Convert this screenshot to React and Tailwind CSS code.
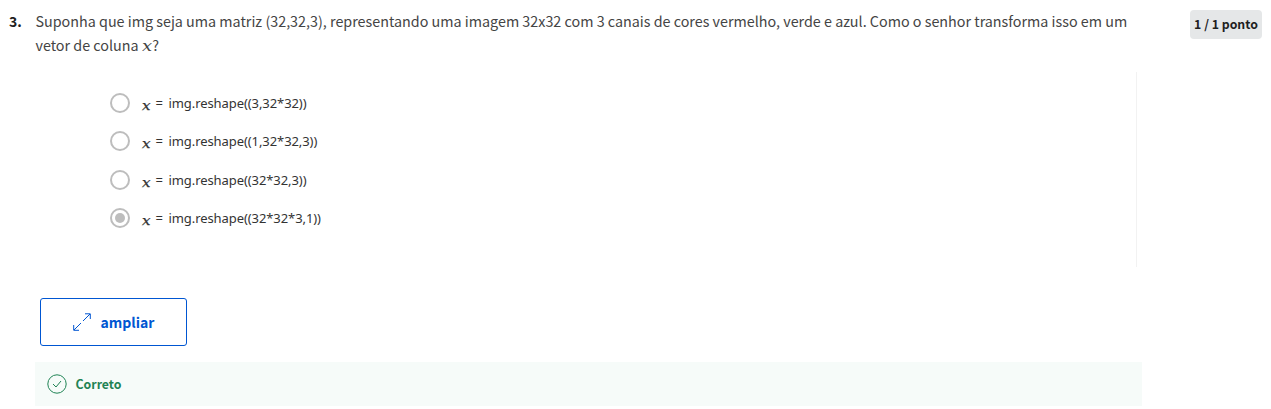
const options = [
  { text: 'img.reshape((3,32*32))', height: 'h-[38px]' },
  { text: 'img.reshape((1,32*32,3))', height: 'h-[39px]' },
  { text: 'img.reshape((32*32,3))', height: 'h-[38px]' },
  { text: 'img.reshape((32*32*3,1))', height: 'h-[38px]', checked: true },
];

function Radio({ checked }) {
  return (
    <span className="flex h-5 w-5 shrink-0 items-center justify-center rounded-full border-2 border-[#bdbdbd]">
      {checked && <span className="h-2.5 w-2.5 rounded-full bg-[#bdbdbd]" />}
    </span>
  );
}

export default function App() {
  return (
    <main className="flex h-[409px] w-[1271px] flex-col overflow-hidden bg-white font-['Noto_Sans_CJK_SC',sans-serif] text-[#1f1f1f]">
      <div className="flex h-[72px] items-start pl-[9px] pt-[9px]">
        <span className="w-[26.5px] text-[14px] leading-6 font-bold">3.</span>
        <p className="w-[1154.5px] text-[14.33px] leading-6 whitespace-nowrap text-[#444]">
          Suponha que img seja uma matriz (32,32,3), representando uma imagem 32x32 com 3 canais de cores vermelho, verde e azul. Como o senhor transforma isso em um
          <br />
          vetor de coluna <i className="mr-[2px] inline-block origin-left scale-x-120 font-['DejaVu_Serif',serif] text-[15px] leading-none">x</i>?
        </p>
        <span className="mt-px flex h-[29px] w-[72px] items-center justify-center rounded bg-[#e5e7e8] text-[12.3px] font-bold whitespace-nowrap">
          1 / 1 ponto
        </span>
      </div>
      <div className="h-[195px] w-[1137px] border-r border-[#f2f2f2] pt-[12px] pl-[110px]">
        {options.map((o) => (
          <div key={o.text} className={`flex items-start ${o.height}`}>
            <div className="flex h-[38px] items-center">
              <Radio checked={o.checked} />
              <span className="ml-3 flex items-baseline font-['Noto_Sans',sans-serif] text-[13px] leading-5 text-[#333]">
                <span className="w-[13.5px] translate-y-[2px]">
                  <i className="inline-block origin-left scale-x-120 font-['DejaVu_Serif',serif] text-[12.5px] leading-none [-webkit-text-stroke:0.25px_#333]">x</i>
                </span>
                <span className="w-[13px]">=</span>
                <span className="tracking-[-0.08px] whitespace-nowrap">{o.text}</span>
              </span>
            </div>
          </div>
        ))}
      </div>
      <button className="mt-[31px] ml-10 flex h-12 w-[147px] shrink-0 items-center rounded-[3px] border border-[#0056d2] pl-8 text-[14px] font-bold text-[#0056d2]">
        <svg className="mr-[9.5px]" width="18" height="18" viewBox="0 0 18 18" fill="none" stroke="currentColor">
          <path d="M1 17 8 10M10 8l7-7M12 .8h5.3V6M.7 12v5.3H6" />
        </svg>
        ampliar
      </button>
      <div className="mt-4 ml-[35px] flex h-11 w-[1107px] shrink-0 items-center bg-[#f6fbf9] pl-3 text-[12.3px] font-bold text-[#1f8354]">
        <svg className="mr-[8.5px]" width="20" height="20" viewBox="0 0 20 20" fill="none" stroke="currentColor">
          <circle cx="10" cy="10" r="9.2" />
          <path d="m6 10 3 3 5-6" />
        </svg>
        Correto
      </div>
    </main>
  );
}
